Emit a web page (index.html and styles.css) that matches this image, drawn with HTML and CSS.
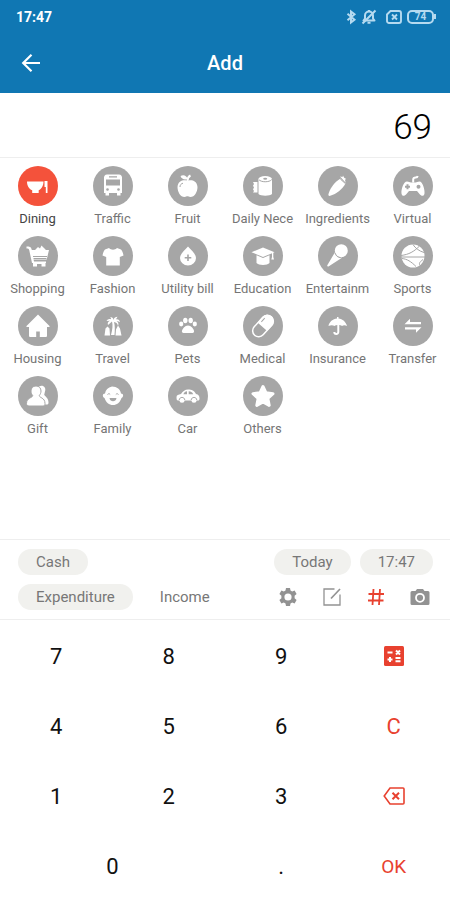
FILE: index.html
```html
<!DOCTYPE html>
<html lang="en">
<head>
<meta charset="utf-8">
<meta name="viewport" content="width=device-width, initial-scale=1">
<title>Add</title>
<link rel="stylesheet" href="styles.css">
</head>
<body>
<header class="top">
  <div class="status">
    <span class="clock">17:47</span>
    <div class="status-icons">
      <svg width="11" height="16" viewBox="0 0 11 16" fill="none" stroke="currentColor" stroke-width="2"><path d="M1.500 4.800l7 6L5 13.500v-11L8.500 5.200l-7 6"/></svg>
      <svg class="bell" width="16" height="16" viewBox="0 0 16 16" fill="none" stroke="currentColor" stroke-width="2" stroke-linejoin="round"><path d="M2.500 11.500h11L12 9.500V6.500a4 4 0 0 0-8 0v3z"/><path d="M6.500 13.700h3M8 1v1.500M1.500 14.500L14.500 1.500"/></svg>
      <svg class="sim" width="16" height="14" viewBox="0 0 16 14" fill="none" stroke="currentColor" stroke-width="1.900"><path d="M4.500 1H13a2 2 0 0 1 2 2v8a2 2 0 0 1-2 2H3a2 2 0 0 1-2-2V4.500z"/><path d="M6 4.500l5 5M11 4.500l-5 5"/></svg>
      <span class="battery"><span class="battery-level">74</span></span>
    </div>
  </div>
  <div class="bar">
    <button class="back" type="button" aria-label="Back"><svg width="20" height="20" viewBox="0 0 20 20" fill="none" stroke="currentColor" stroke-width="2.200"><path d="M19 10H2.500M10.500 1.700L2.200 10l8.300 8.300"/></svg></button>
    <h1 class="title">Add</h1>
  </div>
</header>

<output class="amount" aria-label="Amount">69</output>

<main class="categories">
  <button class="category selected" type="button"><svg class="disc" viewBox="0 0 40 40"><path d="M9 15.500h16.500c0 4-2 7.500-4.800 8.700V27h-6.500v-2.800C11 23 9 19.500 9 15.500z"/><path d="M26.500 15h3v12h-1.700v-6h-1.300z"/></svg><span class="name">Dining</span></button>
  <button class="category" type="button"><svg class="disc" viewBox="0 0 40 40"><path d="M14 8.500h12c2 0 3 1.500 3 3v15.500h-1.500v2.500h-3.500V27h-8v2.500h-3.500V27H11V11.500c0-1.500 1-3 3-3z"/><path class="cut" d="M13 13.500h14v6H13zM16 10.200h8v1.200h-8z"/><circle class="cut" cx="14.500" cy="23.500" r="1.300"/><circle class="cut" cx="25.500" cy="23.500" r="1.300"/></svg><span class="name">Traffic</span></button>
  <button class="category" type="button"><svg class="disc" viewBox="0 0 40 40"><path d="M19.500 15c2-1.300 9.500-1.500 10 6 0 5-3 10-7 10-2 0-2-.7-3-.7s-1.500.7-3 .7c-4 0-7-5-7-10 .5-7.500 8-7.300 10-6z"/><path d="M12.500 10c3-1.500 6-.7 7 3-3 1-6 0-7-3z"/><path class="line" d="M19.500 15c0-3 1-4.500 3-5.500"/><path class="cut-line" d="M12 21c0-2 1-3.300 3-3.800"/></svg><span class="name">Fruit</span></button>
  <button class="category" type="button"><svg class="disc" viewBox="0 0 40 40"><path d="M15.500 13v15c2 2.200 11.500 2.200 13.500 0V13z"/><ellipse cx="22.200" cy="13" rx="6.800" ry="3"/><path class="cut-line" d="M15.800 13.500c2 3 10.800 3 13 0"/><ellipse class="cut" cx="22.200" cy="12.700" rx="2" ry="1"/><path d="M10 16h4.500v10.500H10l1-1.500-1-1.700 1-1.800-1-1.800 1-1.700z"/></svg><span class="name">Daily Nece</span></button>
  <button class="category" type="button"><svg class="disc" viewBox="0 0 40 40"><path d="M22.500 12.500l5 5c-3 5.500-8.500 10.500-16 12.500-1-.3-1.300-1-1-2 2-6.500 6-12 12-15.500z"/><path d="M22 10.500l2.500.5.500-1.500 1.200 2.200 2 1.300-1.200.8.700 3z"/><path class="cut-line" d="M22.300 13l5 4.500"/></svg><span class="name">Ingredients</span></button>
  <button class="category" type="button"><svg class="disc" viewBox="0 0 40 40"><path d="M14 15.500c2 0 2.500 1 4 1h4.500c1.500 0 2-1 4-1 3 0 5.500 8 5 12-.5 3-3 3-5 .5l-2.500-3h-8l-2.500 3c-2 2.500-4.500 2.500-5-.5-.5-4 2-12 5.500-12z"/><path class="line" d="M20.200 16.500v-3c0-1.500 1-2 2.500-2s1.800-.5 2-1.500"/><path class="cut" d="M13.500 18.300h2v1.500H17v2h-1.500v1.500h-2v-1.500H12v-2h1.500z"/><circle class="cut" cx="25.500" cy="20.800" r="2"/></svg><span class="name">Virtual</span></button>

  <button class="category" type="button"><svg class="disc" viewBox="0 0 40 40"><path d="M8.500 10.500c3 0 4.500 0 5.300 3.500H31l-2.300 9.500H15.500l.5 2h12V27h-.5v3.500h-4V28h-4.500v2.500h-4V27H14l-2.800-13c-.3-1.500-1.200-1.500-2.700-1.500z"/><path d="M17 14l3-3 2 1.500 1.500-3 4.500 4.500z"/><path class="cut-line" d="M15 20.500h14M15.500 22.500h13"/></svg><span class="name">Shopping</span></button>
  <button class="category" type="button"><svg class="disc" viewBox="0 0 40 40"><path d="M16 12c2 2.200 6 2.200 8 0l4 1.500c1.500 1.500 2 3.500 2.500 6L26.800 21v8.500H13.200V21l-3.700-1.500c.5-2.500 1-4.500 2.500-6z"/></svg><span class="name">Fashion</span></button>
  <button class="category" type="button"><svg class="disc" viewBox="0 0 40 40"><path d="M20 10.500c3 3.500 8 7.300 8 11.500a8 7.500 0 0 1-16 0c0-4.200 5-8 8-11.500z"/><path class="cut" d="M19.200 18.500h1.600V21h2.500v1.600h-2.500v2.500h-1.600v-2.500h-2.500V21h2.500z"/></svg><span class="name">Utility bill</span></button>
  <button class="category" type="button"><svg class="disc" viewBox="0 0 40 40"><path d="M20 11.500l11.500 4.700L20 21 8.500 16.200z"/><path d="M13.500 19.300L20 22l6.500-2.700V27c-2 2.500-11 2.500-13 0z"/><path d="M29 16.500h1.300V21l.7 2.500h-2.700L29 21z"/></svg><span class="name">Education</span></button>
  <button class="category" type="button"><svg class="disc" viewBox="0 0 40 40"><circle cx="23.300" cy="14.700" r="6.500"/><path d="M17 16.200c1 3 3.500 5.500 7 5.500L10.500 30.500c-1 .3-1.500-.2-1.200-1.200z"/><path class="cut-line" d="M17 17c.9 2.800 2.700 4.500 5.800 4.700"/></svg><span class="name">Entertainm</span></button>
  <button class="category" type="button"><svg class="disc" viewBox="0 0 40 40"><circle cx="20" cy="20" r="11.500"/><path class="cut-line" d="M8 19.500c8-1 13-4 18-9M8 21h24M9 22.500c5 .5 9 3 14 8M20 8.500c2 3.500 6 6.500 11 8M27 29.500c-1-2-1-3 3-6"/></svg><span class="name">Sports</span></button>

  <button class="category" type="button"><svg class="disc" viewBox="0 0 40 40"><path d="M20 8.500L31.500 20c.3.800 0 1-.7 1H29v8.500c0 1-.5 1.500-1.500 1.500H21.800v-5.500h-3.600V31h-5.700c-1 0-1.500-.5-1.500-1.500V21H9.200c-.7 0-1-.2-.7-1z"/></svg><span class="name">Housing</span></button>
  <button class="category" type="button"><svg class="disc" viewBox="0 0 40 40"><path d="M20.500 14c0-2-1.500-3-3.500-3 1 .8 1.200 1.500 1 2.200-2-.8-3.500 0-4.500 1.800l3.500-.2c-2 1-2.700 2.500-2 4.200l4-3.500c1 3.500.5 8-1 13.500h3.500c.5-5 .5-9.500-.5-13 2.500.5 3.500 1.800 4 4 1-2 .3-4-1.500-4.700 1.500-.3 2.500 0 3.500 1-.3-2.500-2-3.500-4-3l1.500-2.500c-2 0-3.500 1-4 3.200z"/><path d="M11.500 29.500l1-7 2-2 2 2 .5 7zM22.500 29.500l.5-6 2-4 2 3 1.500 7z"/></svg><span class="name">Travel</span></button>
  <button class="category" type="button"><svg class="disc" viewBox="0 0 40 40"><path d="M20 19.500c3 0 6 3.500 6 5.700 0 1.500-1 1.800-2.500 1.800h-7c-1.500 0-2.500-.3-2.500-1.800 0-2.200 3-5.700 6-5.700z"/><ellipse cx="13.200" cy="18" rx="2.100" ry="2.400"/><ellipse cx="17.300" cy="14.500" rx="2.200" ry="2.700"/><ellipse cx="22.700" cy="14.500" rx="2.200" ry="2.700"/><ellipse cx="26.800" cy="18" rx="2.100" ry="2.400"/></svg><span class="name">Pets</span></button>
  <button class="category" type="button"><svg class="disc" viewBox="0 0 40 40"><g transform="rotate(-48 20 20)"><rect class="outline" x="7.500" y="14" width="25" height="12" rx="6"/><path d="M19 13.500h7.500a6.500 6.500 0 0 1 0 13H19z"/><path class="cut-line" d="M22 16h5"/></g></svg><span class="name">Medical</span></button>
  <button class="category" type="button"><svg class="disc" viewBox="0 0 40 40"><path d="M19 12.500v-1.500h1.500v1.500c4 .3 7.500 3.500 8.500 7.500-1.500-1-4-1-5 0-1.500-1.200-6-1.200-7.500 0-1.500-1-4-1-6 0 .5-4 4.500-7.200 8.500-7.500z"/><path class="line" d="M20.300 19v7c0 2.700-4 2.500-4 0"/></svg><span class="name">Insurance</span></button>
  <button class="category" type="button"><svg class="disc" viewBox="0 0 40 40"><path d="M11.500 18.200l5.500-5.500v3.300h11v2.200zM28.500 21.300L23 26.800v-3.300H12v-2.200z"/></svg><span class="name">Transfer</span></button>

  <button class="category" type="button"><svg class="disc" viewBox="0 0 40 40"><path d="M21 10.500c4-2 7.500 1 6 5-.5 1.500-.3 2-.8 3 .5 2 4.300 3 4.300 8 0 1.500-.5 2-2 2H21z"/><path class="ring" d="M18 10c3.200 0 5 2.200 5 5 0 2-.8 3.300-1.700 4.500 0 2.500 5.700 2 5.700 8 0 1.700-.5 2.500-2 2.500H11c-1.500 0-2.500-.8-2.500-2.500 0-6 6.200-5.500 6.200-8-1-1.200-1.700-2.500-1.700-4.500 0-2.800 1.800-5 5-5z"/></svg><span class="name">Gift</span></button>
  <button class="category" type="button"><svg class="disc" viewBox="0 0 40 40"><path d="M19 10.500c5 0 8.500 3 9 7 2.500 0 3 3 .5 4.500-1.500 4.500-4.500 7-8.500 7s-7-2.500-8.500-7C9 20.500 9.500 17.500 12 17.500c.5-3.500 3-6 7-7z"/><path class="cut-line" d="M14.500 18.500c.7-1 2-1 2.700 0M22.800 18.500c.7-1 2-1 2.700 0"/><path class="cut" d="M16.500 22h7c-.5 4.300-6.500 4.300-7 0z"/></svg><span class="name">Family</span></button>
  <button class="category" type="button"><svg class="disc" viewBox="0 0 40 40"><path d="M8.500 21c0-2 2-2.500 4.500-3 2-3 4-4.500 7-4.500 4 0 6 1 8 4.500 2.500.5 3.500 2 3.500 4.500 0 1.500-.5 2-1.500 2H10c-1.200 0-1.500-1-1.500-3.500z"/><circle cx="14" cy="24.300" r="2.500"/><circle cx="26" cy="24.300" r="2.500"/><path class="cut" d="M15.300 18.200c1-1.800 2-2.700 3.700-2.900v2.900zM20.700 15.300c2 0 3.500.8 4.500 2.900h-4.500z"/><path class="cut-line" d="M11.200 24c.3-3.500 5.300-3.500 5.600 0M23.200 24c.3-3.500 5.300-3.500 5.600 0"/></svg><span class="name">Car</span></button>
  <button class="category" type="button"><svg class="disc" viewBox="0 0 40 40"><path class="star" d="M20 10.500l3 6.300 7 .9-5.200 4.700 1.400 7L20 26l-6.200 3.400 1.400-7-5.200-4.700 7-.9z"/></svg><span class="name">Others</span></button>
</main>

<section class="options">
  <div class="row">
    <button class="pill" type="button">Cash</button>
    <div class="when">
      <button class="pill" type="button">Today</button>
      <button class="pill" type="button">17:47</button>
    </div>
  </div>
  <div class="row">
    <div class="kind">
      <button class="pill" type="button">Expenditure</button>
      <button class="pill plain" type="button">Income</button>
    </div>
    <div class="tools">
      <button class="tool" type="button" aria-label="Settings"><svg width="20" height="20" viewBox="0 0 20 20"><path fill="currentColor" fill-rule="evenodd" d="M8 1h4l.5 2.500 1.700 1 2.400-.9 2 3.400-2 1.700v2.600l2 1.700-2 3.400-2.400-.9-1.700 1L12 19H8l-.5-2.500-1.700-1-2.400.9-2-3.400 2-1.700V8.700L1.400 7l2-3.400 2.400.9 1.700-1zM10 6.400a3.600 3.600 0 1 0 0 7.200 3.600 3.600 0 0 0 0-7.200z"/></svg></button>
      <button class="tool" type="button" aria-label="Note"><svg width="20" height="20" viewBox="0 0 20 20" fill="none" stroke="currentColor" stroke-width="1.300"><path d="M12.500 2H2v16h16V7.500"/><path d="M9 11.500l9-9.500" stroke-width="1.700"/></svg></button>
      <button class="tool accent" type="button" aria-label="Tag"><svg width="20" height="20" viewBox="0 0 20 20" fill="none" stroke="currentColor" stroke-width="1.800"><path d="M7.500 2L6.500 18M14 2l-1 16M2.500 7h15.500M2 13.500h15.500"/></svg></button>
      <button class="tool" type="button" aria-label="Photo"><svg width="20" height="20" viewBox="0 0 20 20"><path fill="currentColor" d="M7 2h6l1.500 2H18a1.500 1.500 0 0 1 1.500 1.500v11A1.500 1.500 0 0 1 18 18H2a1.500 1.500 0 0 1-1.500-1.500v-11A1.500 1.500 0 0 1 2 4h3.500z"/><circle cx="10" cy="10.800" r="4" fill="none" stroke="#fff" stroke-width="1.800"/></svg></button>
    </div>
  </div>
</section>

<section class="keypad">
  <button class="key" type="button">7</button>
  <button class="key" type="button">8</button>
  <button class="key" type="button">9</button>
  <button class="key accent" type="button" aria-label="Calculator"><svg width="20" height="20" viewBox="0 0 20 20"><rect width="20" height="20" rx="1.500" fill="currentColor"/><path fill="none" stroke="#fff" stroke-width="2" d="M3.500 6.500h5M12 4.500l4 4M16 4.500l-4 4M3.500 13.500h5M6 11v5M11.500 12h5M11.500 15.200h5"/></svg></button>
  <button class="key" type="button">4</button>
  <button class="key" type="button">5</button>
  <button class="key" type="button">6</button>
  <button class="key accent" type="button">C</button>
  <button class="key" type="button">1</button>
  <button class="key" type="button">2</button>
  <button class="key" type="button">3</button>
  <button class="key accent" type="button" aria-label="Delete"><svg width="22" height="18" viewBox="0 0 22 18" fill="none" stroke="currentColor" stroke-width="1.600"><path d="M7 1h13a1 1 0 0 1 1 1v14a1 1 0 0 1-1 1H7L1.200 9z"/><path d="M9.500 5.700l6.500 6.600M16 5.700l-6.500 6.600" stroke-width="2"/></svg></button>
  <button class="key wide" type="button">0</button>
  <button class="key" type="button">.</button>
  <button class="key accent ok" type="button">OK</button>
</section>
</body>
</html>
```
FILE: styles.css
```css
* {
  box-sizing: border-box;
}

body {
  margin: 0;
  min-height: 100vh;
  display: flex;
  flex-direction: column;
  background: #fff;
  color: #111;
  font-family: Roboto, "Liberation Sans", sans-serif;
}

button {
  margin: 0;
  padding: 0;
  border: 0;
  background: none;
  color: inherit;
  font: inherit;
  cursor: pointer;
}

svg {
  display: block;
}

.top {
  background: #1077b3;
  color: #fff;
}

.status {
  display: flex;
  align-items: center;
  justify-content: space-between;
  height: 33px;
  padding: 0 14px 0 16px;
}

.clock {
  font-size: 14px;
  font-weight: 700;
}

.status-icons {
  display: flex;
  align-items: center;
  color: #b5daf0;
}

.bell {
  margin-left: 4px;
}

.sim {
  margin: 0 5px 0 9px;
}

.battery {
  display: flex;
  align-items: center;
}

.battery::after {
  content: "";
  width: 2px;
  height: 5px;
  background: currentColor;
}

.battery-level {
  width: 27px;
  height: 14px;
  border: 2px solid currentColor;
  border-radius: 5px;
  font-size: 10px;
  font-weight: 700;
  line-height: 10px;
  text-align: center;
}

.bar {
  display: grid;
  grid-template-columns: 62px 1fr 62px;
  align-items: center;
  height: 60px;
}

.back {
  display: grid;
  place-items: center;
  height: 60px;
}

.title {
  margin: 0;
  font-size: 20px;
  font-weight: 500;
  text-align: center;
}

.amount {
  height: 65px;
  padding: 6px 18px 0;
  border-bottom: 1px solid #eee;
  color: #000;
  font-size: 35px;
  font-weight: 300;
  line-height: 58px;
  text-align: right;
}

.categories {
  flex: 1;
  display: grid;
  grid-template-columns: repeat(6, 1fr);
  grid-auto-rows: 70px;
  padding-top: 8px;
}

.category {
  display: flex;
  flex-direction: column;
  align-items: center;
  gap: 4px;
  min-width: 0;
  color: #757575;
  --disc: #a6a6a6;
}

.category.selected {
  color: #444;
  --disc: #f4523b;
}

.disc {
  width: 40px;
  height: 40px;
  border-radius: 50%;
  background: var(--disc);
  fill: #fff;
}

.cut {
  fill: var(--disc);
}

.cut-line {
  fill: none;
  stroke: var(--disc);
  stroke-width: 1;
}

.line {
  fill: none;
  stroke: #fff;
  stroke-width: 2;
}

.outline {
  fill: none;
  stroke: #fff;
  stroke-width: 1.5;
}

.ring {
  stroke: var(--disc);
  stroke-width: 1;
}

.star {
  stroke: #fff;
  stroke-width: 3;
  stroke-linejoin: round;
}

.name {
  font-size: 13px;
  line-height: 18px;
  white-space: nowrap;
}

.options {
  display: flex;
  flex-direction: column;
  gap: 9px;
  padding: 9px 17px 9px 18px;
  border-top: 1px solid #eee;
  border-bottom: 1px solid #eee;
  color: #777;
}

.row,
.when,
.kind,
.tools {
  display: flex;
  align-items: center;
}

.row {
  justify-content: space-between;
}

.when,
.kind {
  gap: 9px;
}

.pill {
  height: 26px;
  padding: 0 18px;
  border-radius: 13px;
  background: #f1f1ee;
  font-size: 15px;
}

.plain {
  background: none;
}

.tools {
  gap: 24px;
  padding-right: 3px;
  color: #929292;
}

.accent {
  color: #e8412f;
}

.keypad {
  display: grid;
  grid-template-columns: repeat(4, 1fr);
  grid-auto-rows: 70px;
}

.key {
  display: grid;
  place-items: center;
  padding-top: 2px;
  font-size: 22px;
}

.wide {
  grid-column: span 2;
}

.ok {
  font-size: 19px;
}
```
